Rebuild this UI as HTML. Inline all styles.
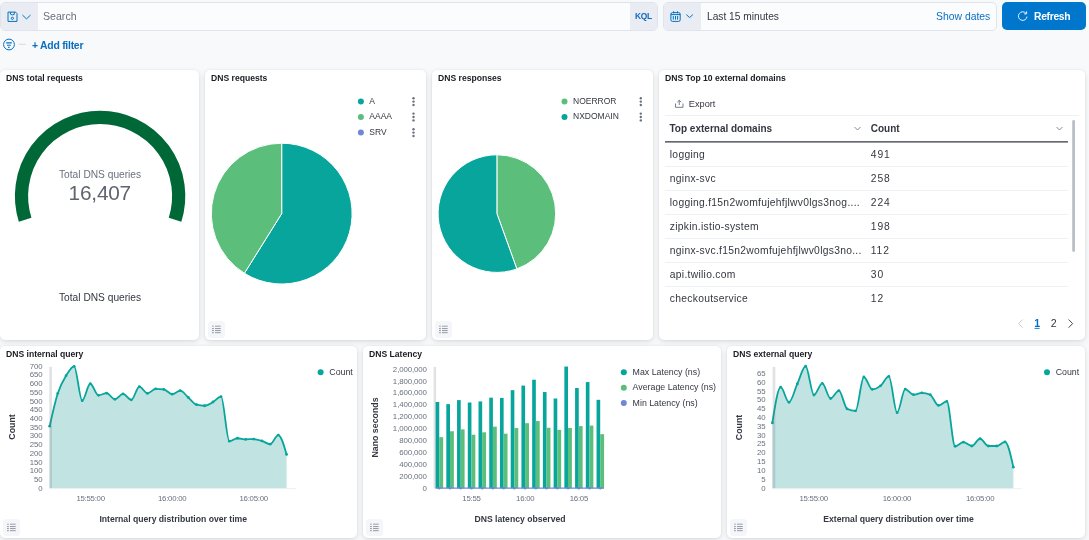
<!DOCTYPE html>
<html><head><meta charset="utf-8">
<style>
*{box-sizing:border-box;margin:0;padding:0}
html,body{width:1089px;height:540px;overflow:hidden;-webkit-font-smoothing:antialiased;background:#f8f9fb;font-family:"Liberation Sans",sans-serif;color:#343741}
.abs{position:absolute;will-change:transform}
.panel{position:absolute;will-change:transform;background:#fff;border-radius:5px;box-shadow:0 0 2px rgba(0,0,0,.07),0 1px 5px rgba(0,0,0,.09),0 3px 8px rgba(0,0,0,.05)}
.ptitle{position:absolute;left:6px;top:3.2px;font-size:8.6px;font-weight:700;color:#1a1c21;white-space:nowrap}
.insp{position:absolute;left:3px;bottom:2.3px;width:17px;height:17px;border-radius:3.5px;background:#f4f6f9}
.t{position:absolute;white-space:nowrap;will-change:transform}
</style></head><body>

<!-- top query bar -->
<div class="abs" style="left:0;top:2px;width:658px;height:28.8px;border:1px solid #dfe3ec;border-radius:5px;background:#fbfcfd"></div>
<div class="abs" style="left:1px;top:3px;width:37px;height:26.8px;background:#e9edf3;border-radius:4px 0 0 4px"></div>
<div class="abs" style="left:630px;top:3px;width:27px;height:26.8px;background:#e9edf3;border-radius:0 4px 4px 0"></div>
<div class="t" style="left:43px;top:10.1px;font-size:10.6px;color:#69707d">Search</div>
<div class="t" style="left:635px;top:11.2px;font-size:8.4px;font-weight:700;color:#1069bb;letter-spacing:-0.25px">KQL</div>

<div class="abs" style="left:663px;top:2px;width:334px;height:28.8px;border:1px solid #dfe3ec;border-radius:5px;background:#fbfcfd"></div>
<div class="abs" style="left:664px;top:3px;width:37px;height:26.8px;background:#e9edf3;border-radius:4px 0 0 4px"></div>
<div class="t" style="left:707px;top:11.4px;font-size:10.2px;color:#343741">Last 15 minutes</div>
<div class="t" style="left:935.5px;top:11.4px;font-size:10.4px;color:#0b6fc0">Show dates</div>

<div class="abs" style="left:1002px;top:2px;width:84px;height:28px;background:#0077cc;border-radius:5px"></div>
<div class="t" style="left:1034.3px;top:10.5px;font-size:10.3px;font-weight:700;color:#fff;letter-spacing:-0.3px">Refresh</div>

<div class="t" style="left:32px;top:40.2px;font-size:10.4px;font-weight:700;color:#0b6fc0;letter-spacing:-0.25px">+ Add filter</div>


<!-- icons -->
<svg class="abs" style="left:0;top:0" width="1089" height="60" viewBox="0 0 1089 60">
<g fill="none" stroke="#0071c2" stroke-width="1">
<path d="M8 12.1 H15.6 L17 13.6 V21.4 H8 Z"/>
<path d="M10.6 12.1 V14.3 Q12.45 15.6 14.3 14.3 V12.1"/>
<circle cx="12.4" cy="18.3" r="1.1"/>
<path d="M22.4 15 L26.5 18.9 L30.6 15"/>
<rect x="670.9" y="12.6" width="9.3" height="8.8" rx="1.6"/>
<path d="M670.9 14.6 H680.2 M673.6 11.3 V13.4 M677.5 11.3 V13.4 M673.3 16 V19.6 M675.5 16 V19.6 M677.6 16 V19.6"/>
<path d="M686.3 14.6 L689.6 17.6 L692.9 14.6"/>
<circle cx="9" cy="44.5" r="5.4"/>
</g>
<g stroke="#0071c2" stroke-width="1.1">
<path d="M6.1 42.9 H11.8 M7 45.2 H10.8 M8.1 47.4 H9.6"/>
</g>
<path d="M18.7 44.3 H25.9" stroke="#d3dae6" stroke-width="1"/>
<g fill="none" stroke="#fff" stroke-width="1" opacity=".92">
<path d="M1025.9 13.2 A4.3 4.3 0 1 0 1027 16.6"/>
<path d="M1026.6 11.4 V13.9 H1024.1"/>
</g>
</svg>

<!-- panels -->
<div class="panel" style="left:0;top:70px;width:199px;height:270px"><div class="ptitle">DNS total requests</div></div>
<div class="panel" style="left:205px;top:70px;width:221px;height:270px"><div class="ptitle">DNS requests</div><div class="insp"><svg width="17" height="17" viewBox="0 0 17 17" style="position:absolute;left:0;top:0"><g fill="#69707d"><rect x="4" y="4.6" width="1.9" height="1.3" opacity=".45"/><rect x="7" y="4.6" width="5.7" height="1.3" opacity=".5"/><rect x="4" y="7.2" width="1.9" height=".85" opacity=".8"/><rect x="7" y="7.2" width="5.7" height=".85" opacity=".8"/><rect x="4" y="9.2" width="1.9" height=".85" opacity=".8"/><rect x="7" y="9.2" width="5.7" height=".85" opacity=".8"/><rect x="4" y="11.3" width="1.9" height=".85" opacity=".8"/><rect x="7" y="11.3" width="5.7" height=".85" opacity=".8"/></g></svg></div></div>
<div class="panel" style="left:432px;top:70px;width:221px;height:270px"><div class="ptitle">DNS responses</div><div class="insp"><svg width="17" height="17" viewBox="0 0 17 17" style="position:absolute;left:0;top:0"><g fill="#69707d"><rect x="4" y="4.6" width="1.9" height="1.3" opacity=".45"/><rect x="7" y="4.6" width="5.7" height="1.3" opacity=".5"/><rect x="4" y="7.2" width="1.9" height=".85" opacity=".8"/><rect x="7" y="7.2" width="5.7" height=".85" opacity=".8"/><rect x="4" y="9.2" width="1.9" height=".85" opacity=".8"/><rect x="7" y="9.2" width="5.7" height=".85" opacity=".8"/><rect x="4" y="11.3" width="1.9" height=".85" opacity=".8"/><rect x="7" y="11.3" width="5.7" height=".85" opacity=".8"/></g></svg></div></div>
<div class="panel" style="left:659px;top:70px;width:426px;height:270px"><div class="ptitle">DNS Top 10 external domains</div></div>

<div class="panel" style="left:0;top:346px;width:357px;height:192px"><div class="ptitle">DNS internal query</div><div class="insp"><svg width="17" height="17" viewBox="0 0 17 17" style="position:absolute;left:0;top:0"><g fill="#69707d"><rect x="4" y="4.6" width="1.9" height="1.3" opacity=".45"/><rect x="7" y="4.6" width="5.7" height="1.3" opacity=".5"/><rect x="4" y="7.2" width="1.9" height=".85" opacity=".8"/><rect x="7" y="7.2" width="5.7" height=".85" opacity=".8"/><rect x="4" y="9.2" width="1.9" height=".85" opacity=".8"/><rect x="7" y="9.2" width="5.7" height=".85" opacity=".8"/><rect x="4" y="11.3" width="1.9" height=".85" opacity=".8"/><rect x="7" y="11.3" width="5.7" height=".85" opacity=".8"/></g></svg></div></div>
<div class="panel" style="left:363px;top:346px;width:358px;height:192px"><div class="ptitle">DNS Latency</div><div class="insp"><svg width="17" height="17" viewBox="0 0 17 17" style="position:absolute;left:0;top:0"><g fill="#69707d"><rect x="4" y="4.6" width="1.9" height="1.3" opacity=".45"/><rect x="7" y="4.6" width="5.7" height="1.3" opacity=".5"/><rect x="4" y="7.2" width="1.9" height=".85" opacity=".8"/><rect x="7" y="7.2" width="5.7" height=".85" opacity=".8"/><rect x="4" y="9.2" width="1.9" height=".85" opacity=".8"/><rect x="7" y="9.2" width="5.7" height=".85" opacity=".8"/><rect x="4" y="11.3" width="1.9" height=".85" opacity=".8"/><rect x="7" y="11.3" width="5.7" height=".85" opacity=".8"/></g></svg></div></div>
<div class="panel" style="left:727px;top:346px;width:358px;height:192px"><div class="ptitle">DNS external query</div><div class="insp"><svg width="17" height="17" viewBox="0 0 17 17" style="position:absolute;left:0;top:0"><g fill="#69707d"><rect x="4" y="4.6" width="1.9" height="1.3" opacity=".45"/><rect x="7" y="4.6" width="5.7" height="1.3" opacity=".5"/><rect x="4" y="7.2" width="1.9" height=".85" opacity=".8"/><rect x="7" y="7.2" width="5.7" height=".85" opacity=".8"/><rect x="4" y="9.2" width="1.9" height=".85" opacity=".8"/><rect x="7" y="9.2" width="5.7" height=".85" opacity=".8"/><rect x="4" y="11.3" width="1.9" height=".85" opacity=".8"/><rect x="7" y="11.3" width="5.7" height=".85" opacity=".8"/></g></svg></div></div>


<svg class="abs" style="left:0;top:0" width="1089" height="540" viewBox="0 0 1089 540" font-family="Liberation Sans, sans-serif">
<!-- gauge -->
<path d="M25.14 219.64 A78.60 78.60 0 1 1 175.06 219.64" fill="none" stroke="#006837" stroke-width="13.2"/>
<text x="100.1" y="178.3" text-anchor="middle" font-size="10.2" fill="#69707d">Total DNS queries</text>
<text x="99.8" y="199.6" text-anchor="middle" font-size="20.8" letter-spacing="-0.2" fill="#5e6470">16,407</text>
<text x="100.1" y="300.8" text-anchor="middle" font-size="10.2" fill="#343741">Total DNS queries</text>
<!-- pie 2 -->
<path d="M281.7 213.6 L281.7 143.20 A70.4 70.4 0 1 1 244.39 273.30 Z" fill="#07a59b" stroke="#fff" stroke-width="1"/>
<path d="M281.7 213.6 L244.39 273.30 A70.4 70.4 0 0 1 281.7 143.20 Z" fill="#5bbf7b" stroke="#fff" stroke-width="1"/>
<!-- legend 2 -->
<circle cx="360.9" cy="101.6" r="3" fill="#07a59b"/>
<circle cx="360.9" cy="117" r="3" fill="#5bbf7b"/>
<circle cx="360.9" cy="132.6" r="3" fill="#6f87d8"/>
<text x="369.3" y="103.9" font-size="8.5" fill="#343741">A</text>
<text x="369.3" y="119.3" font-size="8.5" fill="#343741">AAAA</text>
<text x="369.3" y="134.9" font-size="8.5" fill="#343741">SRV</text>
<circle cx="413.5" cy="98.2" r="1.2" fill="#69707d"/><circle cx="413.5" cy="101.6" r="1.2" fill="#69707d"/><circle cx="413.5" cy="105.0" r="1.2" fill="#69707d"/><circle cx="413.5" cy="113.6" r="1.2" fill="#69707d"/><circle cx="413.5" cy="117.0" r="1.2" fill="#69707d"/><circle cx="413.5" cy="120.4" r="1.2" fill="#69707d"/><circle cx="413.5" cy="129.2" r="1.2" fill="#69707d"/><circle cx="413.5" cy="132.6" r="1.2" fill="#69707d"/><circle cx="413.5" cy="136.0" r="1.2" fill="#69707d"/><circle cx="640.8" cy="98.2" r="1.2" fill="#69707d"/><circle cx="640.8" cy="101.6" r="1.2" fill="#69707d"/><circle cx="640.8" cy="105.0" r="1.2" fill="#69707d"/><circle cx="640.8" cy="113.6" r="1.2" fill="#69707d"/><circle cx="640.8" cy="117.0" r="1.2" fill="#69707d"/><circle cx="640.8" cy="120.4" r="1.2" fill="#69707d"/>
<!-- pie 3 -->
<path d="M496.9 213.6 L496.9 154.80 A58.8 58.8 0 0 1 516.82 268.92 Z" fill="#5bbf7b" stroke="#fff" stroke-width="1"/>
<path d="M496.9 213.6 L516.82 268.92 A58.8 58.8 0 1 1 496.9 154.80 Z" fill="#07a59b" stroke="#fff" stroke-width="1"/>
<circle cx="564.5" cy="101.6" r="3" fill="#5bbf7b"/>
<circle cx="564.5" cy="117" r="3" fill="#07a59b"/>
<text x="573" y="103.9" font-size="8.5" fill="#343741">NOERROR</text>
<text x="573" y="119.3" font-size="8.5" fill="#343741">NXDOMAIN</text>
<!-- table -->
<line x1="665" y1="115.5" x2="1079" y2="115.5" stroke="#eef0f4" stroke-width="1"/>
<path d="M675.5 103.5 V107.3 H683 V103.5" fill="none" stroke="#69707d" stroke-width="0.9"/><path d="M679.25 105 V100.3 M677.3 102.2 L679.25 100.3 L681.2 102.2" fill="none" stroke="#69707d" stroke-width="0.9"/>
<text x="688.8" y="106.8" font-size="9.2" fill="#343741">Export</text>
<text x="669.5" y="131.8" font-size="10" font-weight="700" fill="#343741">Top external domains</text>
<text x="870.75" y="131.8" font-size="10" font-weight="700" fill="#343741">Count</text>
<path d="M854.5 127 L857.5 130 L860.5 127" fill="none" stroke="#69707d" stroke-width="0.8"/>
<path d="M1056.5 127 L1059.5 130 L1062.5 127" fill="none" stroke="#69707d" stroke-width="0.8"/>
<line x1="665" y1="141.8" x2="1068" y2="141.8" stroke="#343741" stroke-width="1.2"/>
<text x="669.8" y="157.5" font-size="10.3" letter-spacing="0.29" fill="#343741">logging</text>
<text x="870.75" y="157.5" font-size="10.3" letter-spacing="0.9" fill="#343741">491</text>
<line x1="665" y1="166.5" x2="1068" y2="166.5" stroke="#eef0f4" stroke-width="1"/>
<text x="669.8" y="181.5" font-size="10.3" letter-spacing="0.29" fill="#343741">nginx-svc</text>
<text x="870.75" y="181.5" font-size="10.3" letter-spacing="0.9" fill="#343741">258</text>
<line x1="665" y1="190.5" x2="1068" y2="190.5" stroke="#eef0f4" stroke-width="1"/>
<text x="669.8" y="205.5" font-size="10.3" letter-spacing="0.29" fill="#343741">logging.f15n2womfujehfjlwv0lgs3nog....</text>
<text x="870.75" y="205.5" font-size="10.3" letter-spacing="0.9" fill="#343741">224</text>
<line x1="665" y1="214.5" x2="1068" y2="214.5" stroke="#eef0f4" stroke-width="1"/>
<text x="669.8" y="229.5" font-size="10.3" letter-spacing="0.29" fill="#343741">zipkin.istio-system</text>
<text x="870.75" y="229.5" font-size="10.3" letter-spacing="0.9" fill="#343741">198</text>
<line x1="665" y1="238.5" x2="1068" y2="238.5" stroke="#eef0f4" stroke-width="1"/>
<text x="669.8" y="253.5" font-size="10.3" letter-spacing="0.29" fill="#343741">nginx-svc.f15n2womfujehfjlwv0lgs3no...</text>
<text x="870.75" y="253.5" font-size="10.3" letter-spacing="0.9" fill="#343741">112</text>
<line x1="665" y1="262.5" x2="1068" y2="262.5" stroke="#eef0f4" stroke-width="1"/>
<text x="669.8" y="277.5" font-size="10.3" letter-spacing="0.29" fill="#343741">api.twilio.com</text>
<text x="870.75" y="277.5" font-size="10.3" letter-spacing="0.9" fill="#343741">30</text>
<line x1="665" y1="286.5" x2="1068" y2="286.5" stroke="#eef0f4" stroke-width="1"/>
<text x="669.8" y="301.5" font-size="10.3" letter-spacing="0.29" fill="#343741">checkoutservice</text>
<text x="870.75" y="301.5" font-size="10.3" letter-spacing="0.9" fill="#343741">12</text>
<rect x="1072.2" y="120" width="2.8" height="132" rx="1.4" fill="#b9bec7"/>
<path d="M1022.6 319.5 L1018.6 323.6 L1022.6 327.7" fill="none" stroke="#c2c3c6" stroke-width="0.9"/>
<text x="1034.2" y="327.1" font-size="10.6" font-weight="700" fill="#0071c2">1</text><line x1="1034.6" y1="328.4" x2="1039.6" y2="328.4" stroke="#0071c2" stroke-width="0.9"/>
<text x="1050.8" y="327.1" font-size="10.6" fill="#343741">2</text>
<path d="M1068.6 319.5 L1072.6 323.6 L1068.6 327.7" fill="none" stroke="#343741" stroke-width="0.9"/>
<!-- BOTTOM START -->
<path d="M49.67 426.18 C52.36 413.98 55.04 401.77 57.73 393.41 C60.50 384.77 63.28 380.23 66.05 375.68 C68.74 371.28 71.43 366.28 74.11 366.28 C76.80 366.28 79.48 400.66 82.17 400.66 C84.86 400.66 87.54 383.74 90.23 383.74 C93.00 383.74 95.78 395.29 98.55 395.29 C101.24 395.29 103.93 393.14 106.61 393.14 C109.39 393.14 112.16 399.32 114.94 399.32 C117.63 399.32 120.31 393.95 123.00 393.95 C125.77 393.95 128.55 399.86 131.32 399.86 C134.01 399.86 136.70 386.69 139.38 386.69 C142.07 386.69 144.75 393.41 147.44 393.41 C150.22 393.41 152.99 388.84 155.77 388.84 C158.45 388.84 161.14 389.02 163.82 389.38 C166.60 389.75 169.38 394.22 172.15 394.22 C174.84 394.22 177.52 390.72 180.21 390.72 C182.90 390.72 185.58 395.15 188.27 397.44 C191.04 399.80 193.82 403.95 196.59 404.69 C199.28 405.41 201.97 405.77 204.65 405.77 C207.43 405.77 210.20 403.56 212.98 402.01 C215.66 400.50 218.35 396.63 221.04 396.63 C223.81 396.63 226.59 441.22 229.36 441.22 C232.05 441.22 234.74 438.27 237.42 438.27 C240.20 438.27 242.97 439.34 245.75 439.34 C248.43 439.34 251.12 439.07 253.81 439.07 C256.49 439.07 259.18 440.12 261.86 440.95 C264.64 441.81 267.42 444.18 270.19 444.18 C272.88 444.18 275.56 435.04 278.25 435.04 C281.02 435.04 283.80 444.71 286.58 454.38 L286.58 488.6 L49.67 488.6 Z" fill="#c1e3e1"/>
<path d="M49.67 426.18 C52.36 413.98 55.04 401.77 57.73 393.41 C60.50 384.77 63.28 380.23 66.05 375.68 C68.74 371.28 71.43 366.28 74.11 366.28 C76.80 366.28 79.48 400.66 82.17 400.66 C84.86 400.66 87.54 383.74 90.23 383.74 C93.00 383.74 95.78 395.29 98.55 395.29 C101.24 395.29 103.93 393.14 106.61 393.14 C109.39 393.14 112.16 399.32 114.94 399.32 C117.63 399.32 120.31 393.95 123.00 393.95 C125.77 393.95 128.55 399.86 131.32 399.86 C134.01 399.86 136.70 386.69 139.38 386.69 C142.07 386.69 144.75 393.41 147.44 393.41 C150.22 393.41 152.99 388.84 155.77 388.84 C158.45 388.84 161.14 389.02 163.82 389.38 C166.60 389.75 169.38 394.22 172.15 394.22 C174.84 394.22 177.52 390.72 180.21 390.72 C182.90 390.72 185.58 395.15 188.27 397.44 C191.04 399.80 193.82 403.95 196.59 404.69 C199.28 405.41 201.97 405.77 204.65 405.77 C207.43 405.77 210.20 403.56 212.98 402.01 C215.66 400.50 218.35 396.63 221.04 396.63 C223.81 396.63 226.59 441.22 229.36 441.22 C232.05 441.22 234.74 438.27 237.42 438.27 C240.20 438.27 242.97 439.34 245.75 439.34 C248.43 439.34 251.12 439.07 253.81 439.07 C256.49 439.07 259.18 440.12 261.86 440.95 C264.64 441.81 267.42 444.18 270.19 444.18 C272.88 444.18 275.56 435.04 278.25 435.04 C281.02 435.04 283.80 444.71 286.58 454.38" fill="none" stroke="#07a59b" stroke-width="1.8"/>
<circle cx="49.67" cy="426.18" r="1.4" fill="#07a59b"/>
<circle cx="57.73" cy="393.41" r="1.4" fill="#07a59b"/>
<circle cx="66.05" cy="375.68" r="1.4" fill="#07a59b"/>
<circle cx="74.11" cy="366.28" r="1.4" fill="#07a59b"/>
<circle cx="82.17" cy="400.66" r="1.4" fill="#07a59b"/>
<circle cx="90.23" cy="383.74" r="1.4" fill="#07a59b"/>
<circle cx="98.55" cy="395.29" r="1.4" fill="#07a59b"/>
<circle cx="106.61" cy="393.14" r="1.4" fill="#07a59b"/>
<circle cx="114.94" cy="399.32" r="1.4" fill="#07a59b"/>
<circle cx="123.00" cy="393.95" r="1.4" fill="#07a59b"/>
<circle cx="131.32" cy="399.86" r="1.4" fill="#07a59b"/>
<circle cx="139.38" cy="386.69" r="1.4" fill="#07a59b"/>
<circle cx="147.44" cy="393.41" r="1.4" fill="#07a59b"/>
<circle cx="155.77" cy="388.84" r="1.4" fill="#07a59b"/>
<circle cx="163.82" cy="389.38" r="1.4" fill="#07a59b"/>
<circle cx="172.15" cy="394.22" r="1.4" fill="#07a59b"/>
<circle cx="180.21" cy="390.72" r="1.4" fill="#07a59b"/>
<circle cx="188.27" cy="397.44" r="1.4" fill="#07a59b"/>
<circle cx="196.59" cy="404.69" r="1.4" fill="#07a59b"/>
<circle cx="204.65" cy="405.77" r="1.4" fill="#07a59b"/>
<circle cx="212.98" cy="402.01" r="1.4" fill="#07a59b"/>
<circle cx="221.04" cy="396.63" r="1.4" fill="#07a59b"/>
<circle cx="229.36" cy="441.22" r="1.4" fill="#07a59b"/>
<circle cx="237.42" cy="438.27" r="1.4" fill="#07a59b"/>
<circle cx="245.75" cy="439.34" r="1.4" fill="#07a59b"/>
<circle cx="253.81" cy="439.07" r="1.4" fill="#07a59b"/>
<circle cx="261.86" cy="440.95" r="1.4" fill="#07a59b"/>
<circle cx="270.19" cy="444.18" r="1.4" fill="#07a59b"/>
<circle cx="278.25" cy="435.04" r="1.4" fill="#07a59b"/>
<circle cx="286.58" cy="454.38" r="1.4" fill="#07a59b"/>
<rect x="49.3" y="366.9" width="2.7" height="121.70" fill="#69707d" opacity="0.2"/>
<line x1="49.6" y1="488.6" x2="296" y2="488.6" stroke="#eef0f4" stroke-width="1"/>
<text x="42.5" y="490.8" text-anchor="end" font-size="7.8" letter-spacing="-0.1" fill="#69707d">0</text>
<text x="42.5" y="482.1" text-anchor="end" font-size="7.8" letter-spacing="-0.1" fill="#69707d">50</text>
<text x="42.5" y="473.3" text-anchor="end" font-size="7.8" letter-spacing="-0.1" fill="#69707d">100</text>
<text x="42.5" y="464.6" text-anchor="end" font-size="7.8" letter-spacing="-0.1" fill="#69707d">150</text>
<text x="42.5" y="455.9" text-anchor="end" font-size="7.8" letter-spacing="-0.1" fill="#69707d">200</text>
<text x="42.5" y="447.1" text-anchor="end" font-size="7.8" letter-spacing="-0.1" fill="#69707d">250</text>
<text x="42.5" y="438.4" text-anchor="end" font-size="7.8" letter-spacing="-0.1" fill="#69707d">300</text>
<text x="42.5" y="429.7" text-anchor="end" font-size="7.8" letter-spacing="-0.1" fill="#69707d">350</text>
<text x="42.5" y="421.0" text-anchor="end" font-size="7.8" letter-spacing="-0.1" fill="#69707d">400</text>
<text x="42.5" y="412.2" text-anchor="end" font-size="7.8" letter-spacing="-0.1" fill="#69707d">450</text>
<text x="42.5" y="403.5" text-anchor="end" font-size="7.8" letter-spacing="-0.1" fill="#69707d">500</text>
<text x="42.5" y="394.8" text-anchor="end" font-size="7.8" letter-spacing="-0.1" fill="#69707d">550</text>
<text x="42.5" y="386.0" text-anchor="end" font-size="7.8" letter-spacing="-0.1" fill="#69707d">600</text>
<text x="42.5" y="377.3" text-anchor="end" font-size="7.8" letter-spacing="-0.1" fill="#69707d">650</text>
<text x="42.5" y="368.6" text-anchor="end" font-size="7.8" letter-spacing="-0.1" fill="#69707d">700</text>
<text x="90.6" y="500.8" text-anchor="middle" font-size="7.8" letter-spacing="-0.25" fill="#69707d">15:55:00</text>
<text x="172.2" y="500.8" text-anchor="middle" font-size="7.8" letter-spacing="-0.25" fill="#69707d">16:00:00</text>
<text x="253.7" y="500.8" text-anchor="middle" font-size="7.8" letter-spacing="-0.25" fill="#69707d">16:05:00</text>
<text x="173.2" y="521.9" text-anchor="middle" font-size="8.65" font-weight="700" fill="#343741">Internal query distribution over time</text>
<text transform="translate(14.6 427) rotate(-90)" text-anchor="middle" font-size="8.8" font-weight="700" fill="#343741">Count</text>
<circle cx="320.6" cy="372.25" r="3" fill="#07a59b"/><text x="329.3" y="374.6" font-size="8.8" fill="#343741">Count</text>
<path d="M772.35 422.90 C775.12 405.05 777.89 387.21 780.67 387.21 C783.44 387.21 786.21 402.24 788.99 402.24 C791.76 402.24 794.53 389.98 797.31 383.99 C800.08 377.99 802.85 366.27 805.63 366.27 C808.40 366.27 811.17 394.99 813.95 394.99 C816.72 394.99 819.49 383.45 822.27 383.45 C825.04 383.45 827.81 398.48 830.59 398.48 C833.36 398.48 836.13 390.70 838.90 390.70 C841.68 390.70 844.45 407.69 847.22 408.95 C850.00 410.20 852.77 410.82 855.54 410.82 C858.32 410.82 861.09 377.01 863.86 377.01 C866.64 377.01 869.41 389.35 872.18 389.35 C874.96 389.35 877.73 388.01 880.50 385.86 C883.28 383.72 886.05 376.47 888.82 376.47 C891.60 376.47 894.37 412.70 897.14 412.70 C899.83 412.70 902.51 389.08 905.20 389.08 C907.97 389.08 910.74 394.72 913.52 394.72 C916.29 394.72 919.06 392.84 921.84 392.84 C924.61 392.84 927.38 393.47 930.16 394.72 C932.93 395.97 935.70 405.46 938.48 405.46 C941.25 405.46 944.02 401.43 946.80 401.43 C949.57 401.43 952.34 446.25 955.12 446.25 C957.89 446.25 960.66 442.22 963.44 442.22 C966.21 442.22 968.98 445.98 971.76 445.98 C974.53 445.98 977.30 438.74 980.08 438.74 C982.85 438.74 985.62 445.98 988.40 445.98 C991.17 445.98 993.94 445.98 996.71 445.98 C999.49 445.98 1002.26 441.96 1005.03 441.96 C1007.81 441.96 1010.58 454.57 1013.35 467.18 L1013.35 488.7 L772.35 488.7 Z" fill="#c1e3e1"/>
<path d="M772.35 422.90 C775.12 405.05 777.89 387.21 780.67 387.21 C783.44 387.21 786.21 402.24 788.99 402.24 C791.76 402.24 794.53 389.98 797.31 383.99 C800.08 377.99 802.85 366.27 805.63 366.27 C808.40 366.27 811.17 394.99 813.95 394.99 C816.72 394.99 819.49 383.45 822.27 383.45 C825.04 383.45 827.81 398.48 830.59 398.48 C833.36 398.48 836.13 390.70 838.90 390.70 C841.68 390.70 844.45 407.69 847.22 408.95 C850.00 410.20 852.77 410.82 855.54 410.82 C858.32 410.82 861.09 377.01 863.86 377.01 C866.64 377.01 869.41 389.35 872.18 389.35 C874.96 389.35 877.73 388.01 880.50 385.86 C883.28 383.72 886.05 376.47 888.82 376.47 C891.60 376.47 894.37 412.70 897.14 412.70 C899.83 412.70 902.51 389.08 905.20 389.08 C907.97 389.08 910.74 394.72 913.52 394.72 C916.29 394.72 919.06 392.84 921.84 392.84 C924.61 392.84 927.38 393.47 930.16 394.72 C932.93 395.97 935.70 405.46 938.48 405.46 C941.25 405.46 944.02 401.43 946.80 401.43 C949.57 401.43 952.34 446.25 955.12 446.25 C957.89 446.25 960.66 442.22 963.44 442.22 C966.21 442.22 968.98 445.98 971.76 445.98 C974.53 445.98 977.30 438.74 980.08 438.74 C982.85 438.74 985.62 445.98 988.40 445.98 C991.17 445.98 993.94 445.98 996.71 445.98 C999.49 445.98 1002.26 441.96 1005.03 441.96 C1007.81 441.96 1010.58 454.57 1013.35 467.18" fill="none" stroke="#07a59b" stroke-width="1.8"/>
<circle cx="772.35" cy="422.90" r="1.4" fill="#07a59b"/>
<circle cx="780.67" cy="387.21" r="1.4" fill="#07a59b"/>
<circle cx="788.99" cy="402.24" r="1.4" fill="#07a59b"/>
<circle cx="797.31" cy="383.99" r="1.4" fill="#07a59b"/>
<circle cx="805.63" cy="366.27" r="1.4" fill="#07a59b"/>
<circle cx="813.95" cy="394.99" r="1.4" fill="#07a59b"/>
<circle cx="822.27" cy="383.45" r="1.4" fill="#07a59b"/>
<circle cx="830.59" cy="398.48" r="1.4" fill="#07a59b"/>
<circle cx="838.90" cy="390.70" r="1.4" fill="#07a59b"/>
<circle cx="847.22" cy="408.95" r="1.4" fill="#07a59b"/>
<circle cx="855.54" cy="410.82" r="1.4" fill="#07a59b"/>
<circle cx="863.86" cy="377.01" r="1.4" fill="#07a59b"/>
<circle cx="872.18" cy="389.35" r="1.4" fill="#07a59b"/>
<circle cx="880.50" cy="385.86" r="1.4" fill="#07a59b"/>
<circle cx="888.82" cy="376.47" r="1.4" fill="#07a59b"/>
<circle cx="897.14" cy="412.70" r="1.4" fill="#07a59b"/>
<circle cx="905.20" cy="389.08" r="1.4" fill="#07a59b"/>
<circle cx="913.52" cy="394.72" r="1.4" fill="#07a59b"/>
<circle cx="921.84" cy="392.84" r="1.4" fill="#07a59b"/>
<circle cx="930.16" cy="394.72" r="1.4" fill="#07a59b"/>
<circle cx="938.48" cy="405.46" r="1.4" fill="#07a59b"/>
<circle cx="946.80" cy="401.43" r="1.4" fill="#07a59b"/>
<circle cx="955.12" cy="446.25" r="1.4" fill="#07a59b"/>
<circle cx="963.44" cy="442.22" r="1.4" fill="#07a59b"/>
<circle cx="971.76" cy="445.98" r="1.4" fill="#07a59b"/>
<circle cx="980.08" cy="438.74" r="1.4" fill="#07a59b"/>
<circle cx="988.40" cy="445.98" r="1.4" fill="#07a59b"/>
<circle cx="996.71" cy="445.98" r="1.4" fill="#07a59b"/>
<circle cx="1005.03" cy="441.96" r="1.4" fill="#07a59b"/>
<circle cx="1013.35" cy="467.18" r="1.4" fill="#07a59b"/>
<rect x="772.6" y="366.9" width="2.7" height="121.80" fill="#69707d" opacity="0.2"/>
<line x1="772" y1="488.7" x2="1022" y2="488.7" stroke="#eef0f4" stroke-width="1"/>
<text x="765.4" y="490.5" text-anchor="end" font-size="7.8" letter-spacing="-0.1" fill="#69707d">0</text>
<text x="765.4" y="481.7" text-anchor="end" font-size="7.8" letter-spacing="-0.1" fill="#69707d">5</text>
<text x="765.4" y="472.9" text-anchor="end" font-size="7.8" letter-spacing="-0.1" fill="#69707d">10</text>
<text x="765.4" y="464.1" text-anchor="end" font-size="7.8" letter-spacing="-0.1" fill="#69707d">15</text>
<text x="765.4" y="455.3" text-anchor="end" font-size="7.8" letter-spacing="-0.1" fill="#69707d">20</text>
<text x="765.4" y="446.4" text-anchor="end" font-size="7.8" letter-spacing="-0.1" fill="#69707d">25</text>
<text x="765.4" y="437.6" text-anchor="end" font-size="7.8" letter-spacing="-0.1" fill="#69707d">30</text>
<text x="765.4" y="428.8" text-anchor="end" font-size="7.8" letter-spacing="-0.1" fill="#69707d">35</text>
<text x="765.4" y="420.0" text-anchor="end" font-size="7.8" letter-spacing="-0.1" fill="#69707d">40</text>
<text x="765.4" y="411.2" text-anchor="end" font-size="7.8" letter-spacing="-0.1" fill="#69707d">45</text>
<text x="765.4" y="402.4" text-anchor="end" font-size="7.8" letter-spacing="-0.1" fill="#69707d">50</text>
<text x="765.4" y="393.6" text-anchor="end" font-size="7.8" letter-spacing="-0.1" fill="#69707d">55</text>
<text x="765.4" y="384.8" text-anchor="end" font-size="7.8" letter-spacing="-0.1" fill="#69707d">60</text>
<text x="765.4" y="376.0" text-anchor="end" font-size="7.8" letter-spacing="-0.1" fill="#69707d">65</text>
<text x="813.7" y="500.8" text-anchor="middle" font-size="7.8" letter-spacing="-0.25" fill="#69707d">15:55:00</text>
<text x="896.9" y="500.8" text-anchor="middle" font-size="7.8" letter-spacing="-0.25" fill="#69707d">16:00:00</text>
<text x="980.1" y="500.8" text-anchor="middle" font-size="7.8" letter-spacing="-0.25" fill="#69707d">16:05:00</text>
<text x="898.5" y="521.9" text-anchor="middle" font-size="8.65" font-weight="700" fill="#343741">External query distribution over time</text>
<text transform="translate(741.6 427.5) rotate(-90)" text-anchor="middle" font-size="8.8" font-weight="700" fill="#343741">Count</text>
<circle cx="1047" cy="372.25" r="3" fill="#07a59b"/><text x="1055.7" y="374.6" font-size="8.8" fill="#343741">Count</text>
<rect x="433.6" y="366.9" width="2.5" height="121.40" fill="#69707d" opacity="0.2"/>
<text x="426.9" y="490.5" text-anchor="end" font-size="7.9" letter-spacing="-0.12" fill="#69707d">0</text>
<text x="426.9" y="478.6" text-anchor="end" font-size="7.9" letter-spacing="-0.12" fill="#69707d">200,000</text>
<text x="426.9" y="466.7" text-anchor="end" font-size="7.9" letter-spacing="-0.12" fill="#69707d">400,000</text>
<text x="426.9" y="454.8" text-anchor="end" font-size="7.9" letter-spacing="-0.12" fill="#69707d">600,000</text>
<text x="426.9" y="442.9" text-anchor="end" font-size="7.9" letter-spacing="-0.12" fill="#69707d">800,000</text>
<text x="426.9" y="431.1" text-anchor="end" font-size="7.9" letter-spacing="-0.12" fill="#69707d">1,000,000</text>
<text x="426.9" y="419.2" text-anchor="end" font-size="7.9" letter-spacing="-0.12" fill="#69707d">1,200,000</text>
<text x="426.9" y="407.3" text-anchor="end" font-size="7.9" letter-spacing="-0.12" fill="#69707d">1,400,000</text>
<text x="426.9" y="395.4" text-anchor="end" font-size="7.9" letter-spacing="-0.12" fill="#69707d">1,600,000</text>
<text x="426.9" y="383.5" text-anchor="end" font-size="7.9" letter-spacing="-0.12" fill="#69707d">1,800,000</text>
<text x="426.9" y="371.6" text-anchor="end" font-size="7.9" letter-spacing="-0.12" fill="#69707d">2,000,000</text>
<rect x="435.60" y="401.98" width="3.65" height="86.32" fill="#07a59b"/>
<rect x="439.25" y="437.15" width="3.9" height="51.15" fill="#5bbf7b"/>
<rect x="446.33" y="404.13" width="3.65" height="84.17" fill="#07a59b"/>
<rect x="449.98" y="431.24" width="3.9" height="57.06" fill="#5bbf7b"/>
<rect x="457.06" y="400.10" width="3.65" height="88.20" fill="#07a59b"/>
<rect x="460.71" y="429.36" width="3.9" height="58.94" fill="#5bbf7b"/>
<rect x="467.79" y="402.52" width="3.65" height="85.78" fill="#07a59b"/>
<rect x="471.44" y="434.73" width="3.9" height="53.57" fill="#5bbf7b"/>
<rect x="478.52" y="401.44" width="3.65" height="86.86" fill="#07a59b"/>
<rect x="482.17" y="432.32" width="3.9" height="55.98" fill="#5bbf7b"/>
<rect x="489.25" y="397.68" width="3.65" height="90.62" fill="#07a59b"/>
<rect x="492.90" y="426.68" width="3.9" height="61.62" fill="#5bbf7b"/>
<rect x="499.98" y="397.95" width="3.65" height="90.35" fill="#07a59b"/>
<rect x="503.63" y="433.66" width="3.9" height="54.64" fill="#5bbf7b"/>
<rect x="510.71" y="390.17" width="3.65" height="98.13" fill="#07a59b"/>
<rect x="514.36" y="428.02" width="3.9" height="60.28" fill="#5bbf7b"/>
<rect x="521.44" y="385.60" width="3.65" height="102.70" fill="#07a59b"/>
<rect x="525.09" y="423.19" width="3.9" height="65.11" fill="#5bbf7b"/>
<rect x="532.17" y="379.70" width="3.65" height="108.60" fill="#07a59b"/>
<rect x="535.82" y="421.04" width="3.9" height="67.26" fill="#5bbf7b"/>
<rect x="542.90" y="392.05" width="3.65" height="96.25" fill="#07a59b"/>
<rect x="546.55" y="427.75" width="3.9" height="60.55" fill="#5bbf7b"/>
<rect x="553.63" y="398.49" width="3.65" height="89.81" fill="#07a59b"/>
<rect x="557.28" y="429.90" width="3.9" height="58.40" fill="#5bbf7b"/>
<rect x="564.36" y="366.54" width="3.65" height="121.76" fill="#07a59b"/>
<rect x="568.01" y="428.02" width="3.9" height="60.28" fill="#5bbf7b"/>
<rect x="575.09" y="388.02" width="3.65" height="100.28" fill="#07a59b"/>
<rect x="578.74" y="426.14" width="3.9" height="62.16" fill="#5bbf7b"/>
<rect x="585.82" y="382.11" width="3.65" height="106.19" fill="#07a59b"/>
<rect x="589.47" y="425.60" width="3.9" height="62.70" fill="#5bbf7b"/>
<rect x="596.55" y="399.83" width="3.65" height="88.47" fill="#07a59b"/>
<rect x="600.20" y="434.19" width="3.9" height="54.11" fill="#5bbf7b"/>
<line x1="435.60" y1="488.2" x2="604.00" y2="488.2" stroke="#6f87d8" stroke-width="1.2"/>
<circle cx="439.30" cy="488.2" r="1.2" fill="#6f87d8"/>
<circle cx="450.03" cy="488.2" r="1.2" fill="#6f87d8"/>
<circle cx="460.76" cy="488.2" r="1.2" fill="#6f87d8"/>
<circle cx="471.49" cy="488.2" r="1.2" fill="#6f87d8"/>
<circle cx="482.22" cy="488.2" r="1.2" fill="#6f87d8"/>
<circle cx="492.95" cy="488.2" r="1.2" fill="#6f87d8"/>
<circle cx="503.68" cy="488.2" r="1.2" fill="#6f87d8"/>
<circle cx="514.41" cy="488.2" r="1.2" fill="#6f87d8"/>
<circle cx="525.14" cy="488.2" r="1.2" fill="#6f87d8"/>
<circle cx="535.87" cy="488.2" r="1.2" fill="#6f87d8"/>
<circle cx="546.60" cy="488.2" r="1.2" fill="#6f87d8"/>
<circle cx="557.33" cy="488.2" r="1.2" fill="#6f87d8"/>
<circle cx="568.06" cy="488.2" r="1.2" fill="#6f87d8"/>
<circle cx="578.79" cy="488.2" r="1.2" fill="#6f87d8"/>
<circle cx="589.52" cy="488.2" r="1.2" fill="#6f87d8"/>
<circle cx="600.25" cy="488.2" r="1.2" fill="#6f87d8"/>
<text x="471.5" y="500.8" text-anchor="middle" font-size="7.8" letter-spacing="-0.25" fill="#69707d">15:55</text>
<text x="525.2" y="500.8" text-anchor="middle" font-size="7.8" letter-spacing="-0.25" fill="#69707d">16:00</text>
<text x="578.9" y="500.8" text-anchor="middle" font-size="7.8" letter-spacing="-0.25" fill="#69707d">16:05</text>
<text x="520" y="521.9" text-anchor="middle" font-size="8.65" font-weight="700" fill="#343741">DNS latency observed</text>
<text transform="translate(377.6 427.5) rotate(-90)" text-anchor="middle" font-size="8.8" font-weight="700" fill="#343741">Nano seconds</text>
<circle cx="623.8" cy="372.2" r="3" fill="#07a59b"/><text x="632.6" y="374.8" font-size="8.8" fill="#343741">Max Latency (ns)</text>
<circle cx="623.8" cy="387.7" r="3" fill="#5bbf7b"/><text x="632.6" y="390.3" font-size="8.8" fill="#343741">Average Latency (ns)</text>
<circle cx="623.8" cy="402.9" r="3" fill="#6f87d8"/><text x="632.6" y="405.5" font-size="8.8" fill="#343741">Min Latency (ns)</text>
<!-- BOTTOM END -->
</svg>
</body></html>
